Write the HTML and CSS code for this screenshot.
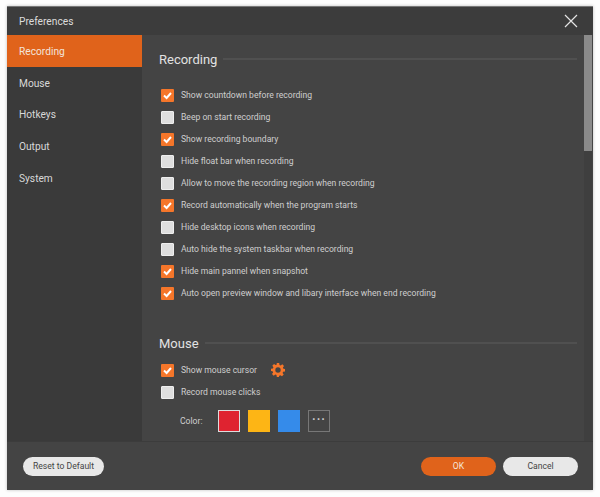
FILE: index.html
```html
<!DOCTYPE html>
<html lang="en">
<head>
<meta charset="utf-8">
<title>Preferences</title>
<link rel="stylesheet" href="styles.css">
</head>
<body>
<div class="window">
  <header class="titlebar">
    <span class="title">Preferences</span>
    <svg class="close" width="14" height="14" viewBox="0 0 14 14"><path d="M1 1L13 13M13 1L1 13" stroke="#e4e4e4" stroke-width="1.2" fill="none"/></svg>
  </header>
  <div class="middle">
    <nav class="sidebar">
      <div class="nav-item active">Recording</div>
      <div class="nav-item">Mouse</div>
      <div class="nav-item">Hotkeys</div>
      <div class="nav-item">Output</div>
      <div class="nav-item">System</div>
    </nav>
    <main class="content">
      <div class="scroll-area">
        <div class="section-head"><h2>Recording</h2><span class="rule"></span></div>
        <ul class="options">
          <li class="opt"><span class="box on"><svg viewBox="0 0 13 13"><path d="M3 6.500L5.600 9L10 4" /></svg></span>Show countdown before recording</li>
          <li class="opt"><span class="box"></span>Beep on start recording</li>
          <li class="opt"><span class="box on"><svg viewBox="0 0 13 13"><path d="M3 6.500L5.600 9L10 4" /></svg></span>Show recording boundary</li>
          <li class="opt"><span class="box"></span>Hide float bar when recording</li>
          <li class="opt"><span class="box"></span>Allow to move the recording region when recording</li>
          <li class="opt"><span class="box on"><svg viewBox="0 0 13 13"><path d="M3 6.500L5.600 9L10 4" /></svg></span>Record automatically when the program starts</li>
          <li class="opt"><span class="box"></span>Hide desktop icons when recording</li>
          <li class="opt"><span class="box"></span>Auto hide the system taskbar when recording</li>
          <li class="opt"><span class="box on"><svg viewBox="0 0 13 13"><path d="M3 6.500L5.600 9L10 4" /></svg></span>Hide main pannel when snapshot</li>
          <li class="opt"><span class="box on"><svg viewBox="0 0 13 13"><path d="M3 6.500L5.600 9L10 4" /></svg></span>Auto open preview window and libary interface when end recording</li>
        </ul>
        <div class="section-head mouse-head"><h2>Mouse</h2><span class="rule"></span></div>
        <ul class="options">
          <li class="opt"><span class="box on"><svg viewBox="0 0 13 13"><path d="M3 6.500L5.600 9L10 4" /></svg></span>Show mouse cursor
            <svg class="gear" width="14" height="14" viewBox="0 0 14 14"><path fill="#f5762a" fill-rule="evenodd" d="M5.800 0h2.400l.3 1.900 1.200.5L11.300 1.300l1.700 1.700-1.100 1.600.5 1.200L14 6.100v2.400l-1.900.300-.5 1.200 1.100 1.600-1.700 1.700-1.600-1.100-1.200.5L7.900 14H5.800l-.3-1.900-1.200-.5-1.600 1.100L1 11l1.100-1.600-.5-1.200L0 7.900V5.800l1.900-.3.500-1.200L1.300 2.700 3 1l1.600 1.100 1-.4zM7 4.300A2.700 2.700 0 1 0 7 9.700 2.700 2.700 0 0 0 7 4.300z"/></svg>
          </li>
          <li class="opt"><span class="box"></span>Record mouse clicks</li>
        </ul>
        <div class="color-row">
          <span class="color-label">Color:</span>
          <span class="swatch red"></span>
          <span class="swatch yellow"></span>
          <span class="swatch blue"></span>
          <span class="swatch more">&#183;&#183;&#183;</span>
        </div>
      </div>
      <div class="scrollbar"><div class="thumb"></div></div>
    </main>
  </div>
  <footer class="footer">
    <button class="btn light reset">Reset to Default</button>
    <div class="actions">
      <button class="btn ok">OK</button>
      <button class="btn light cancel">Cancel</button>
    </div>
  </footer>
</div>
</body>
</html>
```
FILE: styles.css
```css
* { box-sizing: border-box; }
html, body { margin: 0; height: 100%; background: #fdfdfd; overflow: hidden; }
body { padding: 6px 6px 6px 7px; font-family: "Roboto", sans-serif; font-size: 8.600px; color: #d0d0d0; }
.window { width: 586px; height: 484px; display: flex; flex-direction: column; background: #444; border-top: 1px solid #777; box-shadow: 0 0 3px rgba(0,0,0,.25); overflow: hidden; }
.titlebar { height: 28px; flex: none; background: #3c3c3c; display: flex; align-items: center; justify-content: space-between; padding: 0 15px 0 12px; }
.title { font-size: 10.200px; color: #dcdcdc; }
.close { display: block; margin-bottom: 1px; }
.middle { flex: 1; display: flex; min-height: 0; }
.sidebar { width: 135px; flex: none; background: #3a3a3a; }
.nav-item { height: 31.600px; padding: 1px 0 0 12px; display: flex; align-items: center; font-size: 10.200px; color: #d8d8d8; }
.nav-item.active { height: 32px; background: #e0631b; color: #f2e4da; }
.content { flex: 1; display: flex; min-width: 0; }
.scroll-area { flex: 1; overflow: hidden; padding: 14px 0 0 17px; min-width: 0; }
.section-head { display: flex; align-items: center; gap: 6px; height: 20px; padding-right: 7px; }
.section-head h2 { margin: 0; font-size: 13px; font-weight: 400; color: #e2e2e2; }
.rule { flex: 1; height: 2px; background: #505050; }
.options { list-style: none; margin: 15px 0 0; padding: 0 0 0 2px; }
.opt { height: 22px; display: flex; align-items: center; gap: 7px; color: #cfcfcf; }
.box { width: 13px; height: 13px; flex: none; background: #dedede; border: 1px solid #eee; border-radius: 1px; display: block; }
.box.on { background: #f5762a; border: none; }
.box svg { display: block; width: 13px; height: 13px; }
.box svg path { fill: none; stroke: #fff; stroke-width: 2; }
.gear { margin-left: 7px; }
.mouse-head { margin-top: 29px; }
.mouse-head + .options { margin-top: 6px; }
.color-row { display: flex; align-items: center; gap: 8px; margin: 7px 0 0 21px; }
.color-label { width: 26px; margin-right: 4px; }
.swatch { width: 22px; height: 22px; display: block; }
.red { background: #df2330; border: 1px solid #ddd; }
.yellow { background: #fdb515; }
.blue { background: #358bea; }
.more { border: 1px solid #777; color: #ccc; font-size: 12px; font-weight: 700; letter-spacing: 1px; text-align: center; line-height: 18px; }
.scrollbar { width: 8px; flex: none; background: #3f3f3f; margin-right: 1px; }
.thumb { height: 116px; background: #8a8a8a; }
.footer { height: 49px; flex: none; background: #444; border-top: 1px solid #3c3c3c; display: flex; align-items: center; justify-content: space-between; padding: 0 15px 0 16px; }
.actions { display: flex; gap: 7px; }
.btn { height: 19px; border: none; border-radius: 10px; font: inherit; padding: 0; }
.light { background: #e8e8e8; color: #444; }
.reset { width: 81px; }
.ok { width: 75px; background: #e0631b; color: #f5e6da; }
.cancel { width: 75px; }
```
